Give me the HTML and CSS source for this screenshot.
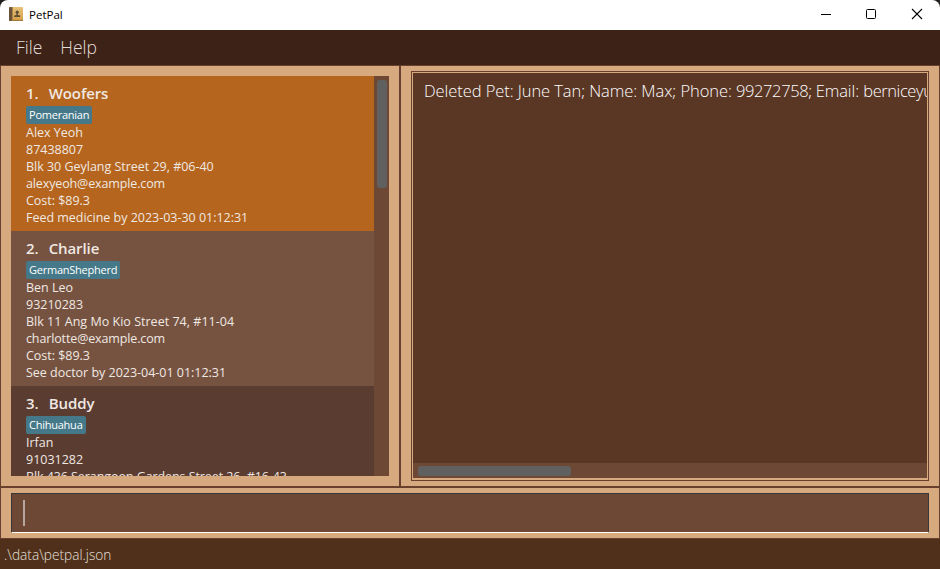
FILE: index.html
```html
<!DOCTYPE html>
<html lang="en">
<head>
<meta charset="utf-8">
<title>PetPal</title>
<link rel="stylesheet" href="styles.css">
</head>
<body>
<div class="window">
  <header class="titlebar">
    <svg class="app-icon" width="14" height="14" viewBox="0 0 14 14">
      <defs><linearGradient id="cover" x1="0" y1="0" x2="0" y2="1"><stop offset="0" stop-color="#e6c078"/><stop offset="1" stop-color="#d6a046"/></linearGradient></defs>
      <rect width="14" height="14" rx="1" fill="url(#cover)"/>
      <rect width="3" height="14" rx="1" fill="#6b5238"/>
      <rect x="3" width="1" height="14" fill="#a98249"/>
      <rect x="4" y="12.8" width="10" height="1.2" fill="#a77a36"/>
      <circle cx="8.2" cy="5.2" r="1.6" fill="#5f4c32"/>
      <path d="M7.500 6h1.400v2l2.300.6v1.400H5.200V8.600l2.300-.6z" fill="#5f4c32"/>
    </svg>
    <span class="app-name">PetPal</span>
    <svg class="controls" width="110" height="14" viewBox="0 0 110 14" fill="none" stroke="#000">
      <path d="M1 7.500h10"/>
      <rect x="46.500" y="2.500" width="9" height="9" rx="1"/>
      <path d="M92 2l10 10M102 2L92 12" stroke-width="1.100"/>
    </svg>
  </header>
  <nav class="menubar"><span class="menu-file">File</span><span class="menu-help">Help</span></nav>
  <main class="panes">
    <section class="pane list-pane">
      <div class="pet-list">
        <div class="cards">
          <article class="card selected">
            <h2><span class="index">1.</span>Woofers</h2>
            <span class="tag">Pomeranian</span>
            <p>Alex Yeoh</p><p>87438807</p><p>Blk 30 Geylang Street 29, #06-40</p><p class="email">alexyeoh@example.com</p><p>Cost: $89.3</p><p>Feed medicine by 2023-03-30 01:12:31</p>
          </article>
          <article class="card even">
            <h2><span class="index">2.</span>Charlie</h2>
            <span class="tag">GermanShepherd</span>
            <p>Ben Leo</p><p>93210283</p><p class="wide">Blk 11 Ang Mo Kio Street 74, #11-04</p><p class="email">charlotte@example.com</p><p>Cost: $89.3</p><p>See doctor by 2023-04-01 01:12:31</p>
          </article>
          <article class="card">
            <h2><span class="index">3.</span>Buddy</h2>
            <span class="tag">Chihuahua</span>
            <p>Irfan</p><p>91031282</p><p class="long">Blk 436 Serangoon Gardens Street 26, #16-43</p>
          </article>
        </div>
        <div class="vscroll"><div class="vthumb"></div></div>
      </div>
    </section>
    <section class="pane result-pane">
      <div class="result">
        <div class="result-text">Deleted Pet: June Tan; Name: Max; Phone: <span class="digits">99272758; </span>Email: <span class="mail">berniceyu@example.com</span></div>
        <div class="hscroll"><div class="hthumb"></div></div>
      </div>
    </section>
  </main>
  <section class="command"><div class="field"><div class="caret"></div></div></section>
  <footer class="status">.\data\petpal.json</footer>
</div>
</body>
</html>
```
FILE: styles.css
```css
* { box-sizing: border-box; }
body { margin: 0; background: #1f1f1f; font-family: "Open Sans", "Noto Sans", sans-serif; }
.window { width: 940px; height: 569px; display: flex; flex-direction: column; overflow: hidden; border-radius: 8px 8px 0 0; background: #50301a; }
.titlebar { height: 30px; flex: none; display: flex; align-items: center; padding: 0 10px 2px 9px; background: #fff; color: #000; }
.app-name { margin-left: 6px; flex: 1; font-size: 11.500px; line-height: 16px; padding-top: 2px; }
.menubar { height: 35px; flex: none; display: flex; gap: 18px; padding-left: 16px; background: #3d2218; color: #e4deda; font-size: 17.500px; font-weight: 300; line-height: 35px; }
.panes { height: 422px; flex: none; display: flex; border-top: 1px solid #693f2d; border-bottom: 1px solid #693f2d; background: #d6aa7e; }
.pane { border: 1px solid #693f2d; border-width: 0 1px; }
.list-pane { width: 400px; padding: 10px; }
.result-pane { flex: 1; min-width: 0; padding: 5px 10px; }
.pet-list { height: 400px; display: flex; overflow: hidden; background: #6d4935; }
.cards { width: 363px; overflow: hidden; }
.card { height: 155px; padding: 8px 15px 0; background: #5a3c31; color: #f0e8e2; }
.card.selected { background: #b5651d; }
.card.even { background: #765341; }
h2 { margin: 0; height: 22px; font-size: 15px; line-height: 19px; font-weight: 600; letter-spacing: -0.1px; white-space: pre; }
.index { display: inline-block; margin-right: 10px; letter-spacing: 0; }
.tag { display: block; width: max-content; height: 18px; padding: 0 3px; border-radius: 2px; background: #457989; color: #fff; font-size: 11px; line-height: 18px; letter-spacing: -0.24px; }
.card p { margin: 0; height: 17px; line-height: 17px; font-size: 12.500px; letter-spacing: -0.02px; white-space: nowrap; }
.card .email { letter-spacing: -0.13px; }
.card .long { letter-spacing: -0.08px; }
.card .wide { letter-spacing: 0.02px; }
.vscroll { width: 15px; padding: 4px 2px 0 3px; }
.vthumb { width: 10px; height: 108px; border-radius: 3px; background: #606060; }
.result { height: 410px; display: flex; flex-direction: column; border: 1px solid #693f2d; padding: 1px 1px 2px; background: #d6aa7e; }
.result-text { flex: 1; overflow: hidden; white-space: nowrap; padding: 6px 0 0 11px; background: #5a3625; color: #fff; font-size: 16.500px; line-height: 24px; font-weight: 300; letter-spacing: -0.07px; }
.digits { letter-spacing: -0.4px; }
.mail { letter-spacing: -0.42px; }
.hscroll { height: 15px; padding: 3px 5px; background: #6d4935; }
.hthumb { width: 153px; height: 10px; border-radius: 3px; background: #606060; }
.command { height: 52px; flex: none; padding: 5px 10px; border: 1px solid #693f2d; background: #d6aa7e; }
.field { height: 40px; padding: 6px 11px; border: 1px solid #383838; border-bottom-color: #fff; background: #6d4935; }
.caret { width: 2px; height: 26px; background: #b8a79e; }
.status { padding: 1px 4px 0; font-size: 13.700px; line-height: 30px; font-weight: 300; color: #e6e0dc; }
```
